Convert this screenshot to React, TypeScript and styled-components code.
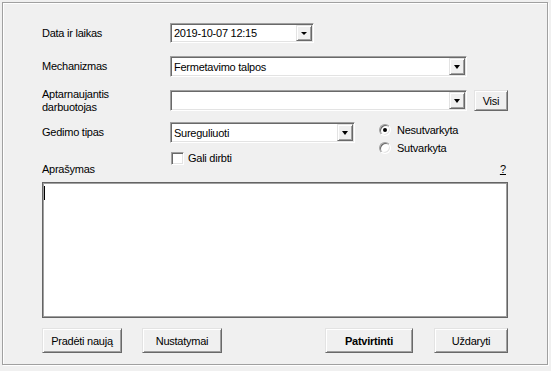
import React from "react";
import styled, { createGlobalStyle } from "styled-components";

const GlobalStyle = createGlobalStyle`
  html, body {
    margin: 0;
    padding: 0;
    background: #f0f0f0;
  }
  body {
    font-family: "Liberation Sans", Arial, sans-serif;
    font-size: 11px;
    color: #000;
    overflow: hidden;
  }
`;

const Frame = styled.div`
  margin: 2px;
  width: 546px;
  box-sizing: border-box;
  border: 1px solid #a0a0a0;
  box-shadow: 1px 1px 0 #fff, inset 1px 1px 0 #fff;
  padding: 20px 0 11px 39px;
  display: flex;
  flex-direction: column;
`;

const FieldRow = styled.div<{ $mt: number; $h: number }>`
  display: flex;
  align-items: center;
  width: 466px;
  height: ${(p) => p.$h}px;
  margin-top: ${(p) => p.$mt}px;
`;

const Label = styled.div`
  width: 128px;
  flex: none;
  line-height: 13px;
  letter-spacing: -0.25px;
  white-space: nowrap;
`;

const ComboBox = styled.div<{ $w: number; $h: number }>`
  display: flex;
  align-items: stretch;
  box-sizing: border-box;
  width: ${(p) => p.$w}px;
  height: ${(p) => p.$h}px;
  flex: none;
  background: #fff;
  border: 1px solid;
  border-color: #a0a0a0 #fff #fff #a0a0a0;
  box-shadow: inset 1px 1px 0 #696969, inset -1px -1px 0 #e3e3e3;
  padding: 1px;
`;

const ComboText = styled.div`
  flex: 1;
  padding-left: 2px;
  display: flex;
  align-items: center;
  letter-spacing: -0.25px;
  white-space: nowrap;
  overflow: hidden;
`;

const DropButton = styled.div<{ $w: number }>`
  width: ${(p) => p.$w}px;
  flex: none;
  box-sizing: border-box;
  background: #f0f0f0;
  border: 1px solid;
  border-color: #e3e3e3 #696969 #696969 #e3e3e3;
  box-shadow: inset 1px 1px 0 #fff, inset -1px -1px 0 #a0a0a0;
  display: flex;
  align-items: center;
  justify-content: center;
`;

const Arrow = styled.span<{ $half: number; $tall: number }>`
  width: 0;
  height: 0;
  border-left: ${(p) => p.$half}px solid transparent;
  border-right: ${(p) => p.$half}px solid transparent;
  border-top: ${(p) => p.$tall}px solid #000;
  margin-top: 1px;
`;

const Button = styled.button<{ $w: number; $h: number; $bold?: boolean }>`
  width: ${(p) => p.$w}px;
  height: ${(p) => p.$h}px;
  flex: none;
  box-sizing: border-box;
  padding: 0;
  margin: 0;
  background: #f0f0f0;
  border: 1px solid;
  border-color: #e3e3e3 #696969 #696969 #e3e3e3;
  box-shadow: inset 1px 1px 0 #fff, inset -1px -1px 0 #a0a0a0;
  font-family: inherit;
  font-size: 11px;
  font-weight: ${(p) => (p.$bold ? 700 : 400)};
  letter-spacing: -0.25px;
  color: #000;
  white-space: nowrap;
`;

const VisiButton = styled(Button)`
  margin-left: 7px;
`;

const StatusGrid = styled.div`
  display: grid;
  grid-template-columns: 128px 185px 1fr;
  grid-template-rows: 21px 33px;
  width: 466px;
  margin-top: 11px;
`;

const GridLabel = styled(Label)<{ $row: number; $align: string }>`
  grid-column: 1;
  grid-row: ${(p) => p.$row};
  align-self: ${(p) => p.$align};
`;

const GridCombo = styled.div`
  grid-column: 2;
  grid-row: 1;
`;

const RadioGroup = styled.div`
  grid-column: 3;
  grid-row: 1 / span 2;
  align-self: start;
  margin-top: -1px;
  margin-left: 24px;
  display: flex;
  flex-direction: column;
`;

const RadioItem = styled.div`
  display: flex;
  align-items: center;
  gap: 6px;
  height: 18px;
  line-height: 13px;
  letter-spacing: -0.25px;
`;

const RadioCircle = styled.span<{ $checked?: boolean }>`
  width: 12px;
  height: 12px;
  box-sizing: border-box;
  border-radius: 50%;
  background: #fff;
  border: 1px solid;
  border-color: #a0a0a0 #fff #fff #a0a0a0;
  box-shadow: inset 1px 1px 0 #696969, inset -1px -1px 0 #e3e3e3;
  display: flex;
  align-items: center;
  justify-content: center;
  flex: none;
  &::after {
    content: "";
    width: 4px;
    height: 4px;
    border-radius: 50%;
    background: ${(p) => (p.$checked ? "#000" : "transparent")};
  }
`;

const CheckRow = styled.div`
  grid-column: 2;
  grid-row: 2;
  align-self: start;
  margin-top: 9px;
  margin-left: 1px;
  display: flex;
  align-items: center;
  gap: 4px;
  height: 13px;
  line-height: 13px;
  letter-spacing: -0.25px;
`;

const CheckBox = styled.span`
  width: 13px;
  height: 13px;
  box-sizing: border-box;
  background: #fff;
  border: 1px solid;
  border-color: #a0a0a0 #fff #fff #a0a0a0;
  box-shadow: inset 1px 1px 0 #696969, inset -1px -1px 0 #e3e3e3;
  flex: none;
`;

const HelpLink = styled.span`
  grid-column: 3;
  grid-row: 2;
  align-self: end;
  justify-self: end;
  margin-right: 2px;
  line-height: 13px;
  text-decoration: underline;
`;

const TextArea = styled.div`
  margin-top: 6px;
  width: 466px;
  height: 136px;
  box-sizing: border-box;
  background: #fff;
  border: 1px solid #646464;
  box-shadow: inset 1px 1px 0 #a0a0a0, inset -1px -1px 0 #a0a0a0;
  padding: 3px 1px;
`;

const Caret = styled.span`
  display: block;
  width: 1px;
  height: 14px;
  background: #000;
`;

const ButtonRow = styled.div`
  margin-top: 10px;
  width: 466px;
  display: flex;
  justify-content: space-between;
`;

const ButtonGroup = styled.div<{ $gap: number }>`
  display: flex;
  gap: ${(p) => p.$gap}px;
`;

export default function App() {
  return (
    <>
      <GlobalStyle />
      <Frame>
        <FieldRow $mt={0} $h={20}>
          <Label>Data ir laikas</Label>
          <ComboBox $w={144} $h={20}>
            <ComboText>2019-10-07 12:15</ComboText>
            <DropButton $w={16}>
              <Arrow $half={3} $tall={3} />
            </DropButton>
          </ComboBox>
        </FieldRow>

        <FieldRow $mt={13} $h={21}>
          <Label>Mechanizmas</Label>
          <ComboBox $w={297} $h={21}>
            <ComboText>Fermetavimo talpos</ComboText>
            <DropButton $w={16}>
              <Arrow $half={3.5} $tall={4} />
            </DropButton>
          </ComboBox>
        </FieldRow>

        <FieldRow $mt={13} $h={21}>
          <Label>
            Aptarnaujantis
            <br />
            darbuotojas
          </Label>
          <ComboBox $w={297} $h={21}>
            <ComboText />
            <DropButton $w={16}>
              <Arrow $half={3.5} $tall={4} />
            </DropButton>
          </ComboBox>
          <VisiButton $w={34} $h={21}>
            Visi
          </VisiButton>
        </FieldRow>

        <StatusGrid>
          <GridLabel $row={1} $align="center">
            Gedimo tipas
          </GridLabel>
          <GridCombo>
            <ComboBox $w={185} $h={21}>
              <ComboText>Sureguliuoti</ComboText>
              <DropButton $w={16}>
                <Arrow $half={3.5} $tall={4} />
              </DropButton>
            </ComboBox>
          </GridCombo>
          <RadioGroup>
            <RadioItem>
              <RadioCircle $checked />
              Nesutvarkyta
            </RadioItem>
            <RadioItem>
              <RadioCircle />
              Sutvarkyta
            </RadioItem>
          </RadioGroup>
          <CheckRow>
            <CheckBox />
            Gali dirbti
          </CheckRow>
          <GridLabel $row={2} $align="end">
            Aprašymas
          </GridLabel>
          <HelpLink>?</HelpLink>
        </StatusGrid>

        <TextArea>
          <Caret />
        </TextArea>

        <ButtonRow>
          <ButtonGroup $gap={20}>
            <Button $w={80} $h={25}>
              Pradėti naują
            </Button>
            <Button $w={80} $h={25}>
              Nustatymai
            </Button>
          </ButtonGroup>
          <ButtonGroup $gap={21}>
            <Button $w={88} $h={25} $bold>
              Patvirtinti
            </Button>
            <Button $w={74} $h={25}>
              Uždaryti
            </Button>
          </ButtonGroup>
        </ButtonRow>
      </Frame>
    </>
  );
}
